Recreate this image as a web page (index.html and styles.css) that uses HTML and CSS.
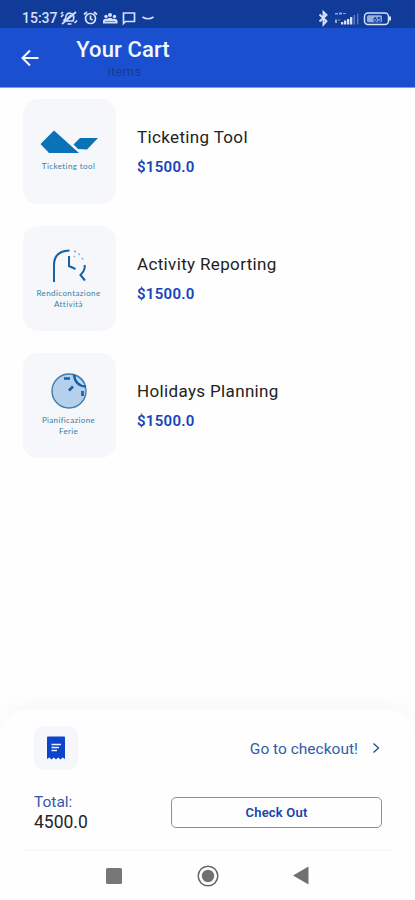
FILE: index.html
```html
<!DOCTYPE html>
<html lang="en">
<head>
<meta charset="utf-8">
<title>Your Cart</title>
<link rel="stylesheet" href="styles.css">
</head>
<body>
<div class="screen">
  <div class="status">
    <span class="time">15:37</span>
    <svg class="left-icons" width="97" height="18" viewBox="0 0 97 18" fill="none" stroke="currentColor" stroke-width="1.7">
      <path d="M3.500 12l2-2.500C6 5 8 3.500 11 4.500s3.500 4 2 7.500H5M7.500 15h4M2 15L16 3M1 8l2.500-2.500M1 5l2-2M14.500 14l2.500-2.500M7 10l4-4"/>
      <circle cx="30.500" cy="9.500" r="5"/><path d="M30.500 6.500v3.500l2.200 1M24 5.500l3-2.500M34 3l3 2.500"/>
      <g fill="currentColor" stroke="none"><circle cx="46" cy="7.500" r="1.700"/><circle cx="50" cy="6" r="2"/><circle cx="54.500" cy="7.500" r="1.700"/><path d="M43 14.500v-2.500c0-2 3-2.500 4-2 1-1.500 5-1.500 6 0 2-.5 4.500.5 4.500 2v2.500z"/></g>
      <path d="M45 12.500h10" stroke="#5575bd" stroke-width=".8"/>
      <path d="M63.500 14.500V4h11v8.500h-9z"/>
      <path d="M82.500 8q5.500 3.500 11 0"/>
    </svg>
    <svg class="right-icons" width="76" height="18" viewBox="0 0 76 18" fill="none" stroke="currentColor" stroke-width="1.500">
      <path stroke-width="1.900" d="M1.500 5.500l7 6.500L5.500 15.500V3l3 3-7 6.500"/>
      <g stroke="none" fill="currentColor"><path opacity=".65" d="M17 4h3v1.500h-3zM21 3.500h3v2h-3zM25 4h3v1h-3zM17 10.500h2V14h-2zM20 10.500h2v1h-2z"/><path d="M23 13h2.300v2.500H23zM26 11.500h2.300v4H26zM29 10h2.300v5.500H29zM32 8h2.300v7.500H32z"/><path opacity=".4" d="M35.500 6h1.500v9.500h-1.500zM39 4.500h1.300v11H39z"/><path d="M71 7.500h2v4h-2z"/></g>
      <rect x="46.500" y="4" width="24" height="11.500" rx="3.500"/>
      <rect x="49" y="6.300" width="15" height="7" rx="1.500" fill="currentColor" stroke="none" opacity=".7"/>
      <text class="charge" x="59" y="12.500" text-anchor="middle">65</text>
    </svg>
  </div>

  <header class="appbar">
    <svg class="back" width="20" height="20" viewBox="0 0 20 20" fill="none" stroke="currentColor" stroke-width="2"><path d="M17.500 10H2M9 2.500L1.500 10 9 17.500"/></svg>
    <div class="heading"><h1>Your Cart</h1><span>items</span></div>
  </header>

  <main class="cart">
    <article class="item">
      <div class="thumb ticket">
        <svg width="60" height="26" viewBox="0 0 60 26" fill="#0b72b7"><path d="M1.500 14L15 .5 40 23H10z"/><path d="M34.500 14.500L41 8H59L48 19.500l-9-.5z"/></svg>
        <p>Ticketing tool</p>
      </div>
      <div class="info"><h2>Ticketing Tool</h2><strong>$1500.0</strong></div>
    </article>
    <article class="item">
      <div class="thumb activity">
        <svg width="36" height="36" viewBox="0 0 36 36" fill="none" stroke="#1763a5" stroke-width="2"><path d="M3 34V17Q3 3 18.500 2.500M18 8v10l6.500 3M33.500 17c1 4-1 7-4 10l4.500 5.500"/><path stroke="#8daed0" stroke-width="1.400" d="M23 3l2 1M27.500 5.500l1.500 1.500M31 10l1 1.500M23 8l1 1"/></svg>
        <p>Rendicontazione<br>Attività</p>
      </div>
      <div class="info"><h2>Activity Reporting</h2><strong>$1500.0</strong></div>
    </article>
    <article class="item">
      <div class="thumb holiday">
        <svg width="38" height="38" viewBox="0 0 38 38" fill="none"><circle cx="19" cy="18" r="17" fill="#b5d0eb" stroke="#417cab" stroke-width="1.400"/><path d="M24 1.500Q25 13 36 13.500" fill="#c7dff5" stroke="#1260ad" stroke-width="2.500"/><path d="M27 2.500q6 3 8 9" stroke="#4c87ba" stroke-width="1.300"/><path d="M14 5.500h6M19 17.500l4-4M32.500 18v5" stroke="#1260ad" stroke-width="2.600"/></svg>
        <p>Pianificazione<br>Ferie</p>
      </div>
      <div class="info"><h2>Holidays Planning</h2><strong>$1500.0</strong></div>
    </article>
  </main>

  <section class="checkout">
    <div class="voucher">
      <div class="receipt"><svg width="20" height="24" viewBox="0 0 20 24"><path fill="#0c45cc" d="M2 .5h16q1 0 1 1V23l-2.300-1.500L14.500 23.500l-2.300-2L10 23.500l-2.200-2-2.300 2-2.200-2L1 23V1.500q0-1 1-1z"/><path d="M5.500 8.500h9.500M5.500 11.500H13M5.500 14.500H11" stroke="#e9f0ff" stroke-width="1.700"/></svg></div>
      <span class="go">Go to checkout!</span>
      <svg class="chevron" width="8" height="12" viewBox="0 0 8 12" fill="none" stroke="#304e8e" stroke-width="1.400"><path d="M1.500 1.500L6.500 6l-5 4.500"/></svg>
    </div>
    <div class="payment">
      <div class="total"><span>Total:</span><b>4500.0</b></div>
      <button>Check Out</button>
    </div>
  </section>

  <nav class="navbar">
    <svg width="16" height="16" viewBox="0 0 16 16"><rect width="16" height="16" rx="1.500" fill="#777"/></svg>
    <svg width="22" height="22" viewBox="0 0 22 22"><circle cx="11" cy="11" r="9.800" fill="none" stroke="#666" stroke-width="1.500"/><circle cx="11" cy="11" r="6.200" fill="#707070"/></svg>
    <svg width="16" height="19" viewBox="0 0 16 19"><path d="M15.500.5v18L0 9.500z" fill="#707070"/></svg>
  </nav>
</div>
</body>
</html>
```
FILE: styles.css
```css
* { box-sizing: border-box; }
body { margin: 0; font-family: Roboto, "Liberation Sans", sans-serif; background: #fefefe; }
h1, h2, p { margin: 0; font-weight: 400; }
svg { display: block; flex: none; }
.screen { width: 415px; height: 900px; display: flex; flex-direction: column; overflow: hidden; }
.status { height: 28px; flex: none; display: flex; align-items: center; padding: 8px 21px 0 22px; background: #113b98; color: #d5e0fa; }
.time { width: 38px; font-size: 14px; font-weight: 500; line-height: 18px; letter-spacing: 0; }
.right-icons { margin-left: auto; }
.charge { font-size: 7px; font-weight: 700; fill: #113b98; stroke: none; }
.appbar { height: 60px; flex: none; display: flex; padding: 8px 21px 0; background: #1a50d0; border-bottom: 1px solid #7c9be0; color: #f4f7ff; }
.back { margin-top: 12px; }
.heading { width: 94px; margin-left: 35px; display: flex; flex-direction: column; align-items: center; }
.heading h1 { font-size: 22px; line-height: 27px; font-weight: 500; white-space: nowrap; letter-spacing: .1px; }
.heading span { font-size: 13px; line-height: 16px; color: #173b94; letter-spacing: .3px; margin: 1px 0 0 3px; }
.cart { flex: 1; padding: 11px 23px; display: flex; flex-direction: column; gap: 22px; }
.item { display: flex; gap: 21px; height: 105px; }
.thumb { width: 93px; height: 105px; border-radius: 15px; background: #f5f7fa; display: flex; flex-direction: column; align-items: center; color: #387fa6; font-family: Lato, sans-serif; font-size: 8px; line-height: 10.500px; text-align: center; padding-right: 2px; }
.ticket { padding-top: 31px; }
.ticket p { margin-top: 5px; letter-spacing: .4px; }
.activity { padding-top: 22px; }
.activity p { margin-top: 4px; letter-spacing: .4px; }
.holiday { padding-top: 20px; }
.holiday p { margin-top: 4px; letter-spacing: .35px; }
.info { padding-top: 28px; }
.info h2 { font-size: 17px; line-height: 21px; letter-spacing: .35px; color: #222; white-space: nowrap; }
.info strong { display: block; margin-top: 10px; font-size: 15px; line-height: 19px; font-weight: 600; color: #1643b9; letter-spacing: .28px; }
.checkout { height: 141px; flex: none; padding: 17px 33px 0 34px; border-radius: 28px 28px 0 0; background: #fefefe; box-shadow: 0 -8px 18px rgba(0,0,0,.022); }
.voucher { display: flex; align-items: center; height: 44px; }
.receipt { width: 44px; height: 44px; border-radius: 10px; background: #f5f7fb; display: grid; place-items: center; }
.go { margin-left: auto; padding-top: 1px; color: #335da9; font-size: 15.500px; letter-spacing: 0; }
.chevron { margin: 0 2px 0 14px; }
.payment { display: flex; justify-content: space-between; margin-top: 23px; }
.total { display: flex; flex-direction: column; line-height: 20px; }
.total span { font-size: 15.500px; line-height: 19px; color: #3159a9; }
.total b { font-size: 17.500px; font-weight: 400; line-height: 21px; color: #252525; }
button { width: 211px; height: 31px; margin-top: 4px; border: 1px solid #6f94c9; border-radius: 5px; background: #fefefe; padding: 0; font: 600 13px Roboto, sans-serif; letter-spacing: .2px; color: #1544ae; }
.navbar { height: 50px; flex: none; margin: 0 23px; border-top: 1px solid #f7f7f7; display: flex; align-items: center; padding-left: 83px; }
.navbar svg:nth-child(2) { margin-left: 75px; }
.navbar svg:nth-child(3) { margin-left: 74px; }
```
